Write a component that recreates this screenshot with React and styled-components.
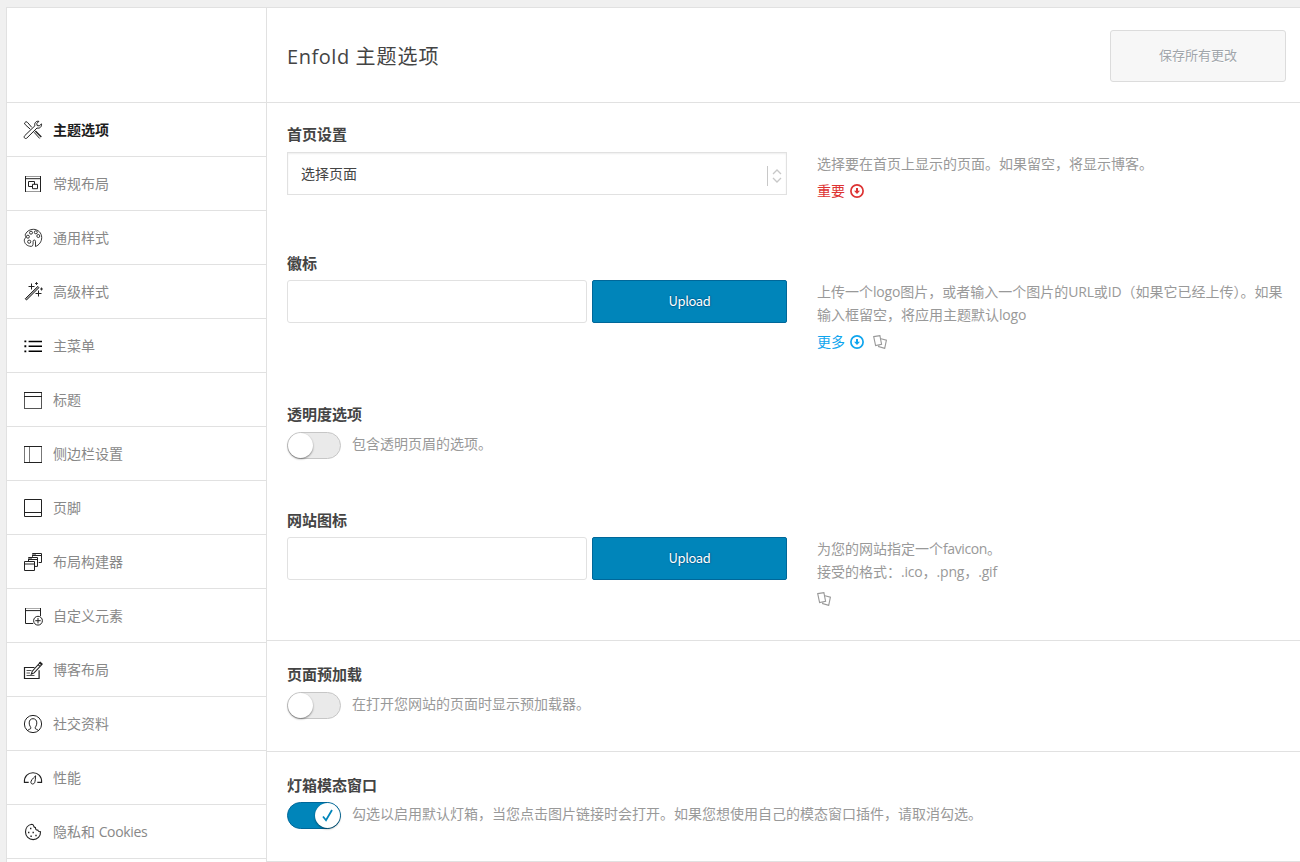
import React, { useState } from "react";
import styled, { createGlobalStyle } from "styled-components";

const GlobalStyle = createGlobalStyle`
  * {
    box-sizing: border-box;
  }
  body {
    margin: 0;
    background: #f0f0f0;
    font-family: "Open Sans", "Noto Sans CJK SC", sans-serif;
    overflow: hidden;
  }
`;

const Page = styled.div`
  display: flex;
  width: 1340px;
  height: 862px;
  padding: 7px 0 0 6px;
  overflow: hidden;
`;

const Sidebar = styled.nav`
  width: 260px;
  flex: none;
  height: 900px;
  background: #fff;
  border: 1px solid #e1e1e1;
  border-right: none;
`;

const Logo = styled.div`
  height: 95px;
  border-bottom: 1px solid #e1e1e1;
`;

const MenuItem = styled.a`
  display: flex;
  align-items: flex-start;
  gap: 10px;
  height: 54px;
  padding: 17px 16px 0;
  border-bottom: 1px solid #e1e1e1;
  color: ${({ $active }) => ($active ? "#1c1c1c" : "#888")};
  font-size: 14px;
  font-weight: ${({ $active }) => ($active ? 700 : 400)};
  line-height: 20px;
  cursor: pointer;
`;

const MenuIcon = styled.svg`
  width: 20px;
  height: 20px;
  flex: none;
  fill: none;
  stroke: #222;
  stroke-width: 1;
`;

const Latin = styled.span`
  letter-spacing: ${({ $spacing }) => $spacing || "-0.2px"};
`;

const Main = styled.main`
  flex: 1;
  height: 900px;
  background: #fff;
  border: 1px solid #e1e1e1;
`;

const Header = styled.header`
  display: flex;
  align-items: flex-start;
  justify-content: space-between;
  height: 95px;
  padding: 22px 53px 0 20px;
  border-bottom: 1px solid #e1e1e1;
`;

const Title = styled.h2`
  margin: 12px 0 0;
  color: #444;
  font-size: 20px;
  font-weight: 400;
  line-height: 30px;
  letter-spacing: 1px;
`;

const SaveButton = styled.button`
  width: 176px;
  height: 52px;
  padding: 0 0 4px;
  background: #f7f7f7;
  border: 1px solid #dcdcdc;
  border-radius: 3px;
  color: #a0a5aa;
  font-family: inherit;
  font-size: 13px;
  text-shadow: 0 1px 0 #fff;
`;

const Section = styled.section`
  display: flex;
  height: ${({ $height }) => $height}px;
  padding: ${({ $top }) => $top || 20}px 0 0 20px;
  border-bottom: ${({ $line }) => ($line ? "1px solid #e1e1e1" : "none")};
`;

const Field = styled.div`
  width: ${({ $wide }) => ($wide ? "900px" : "500px")};
  flex: none;
`;

const Label = styled.h4`
  height: 22px;
  margin: 0 0 ${({ $gap }) => $gap || 7}px;
  color: #444;
  font-size: 15px;
  font-weight: 700;
  line-height: 22px;
`;

const Select = styled.div`
  display: flex;
  justify-content: space-between;
  height: 43px;
  padding: 0 4px 0 13px;
  border: 1px solid #e1e1e1;
  box-shadow: inset 0 1px 2px rgba(0, 0, 0, 0.07);
  color: #444;
  font-size: 14px;
  line-height: 41px;
`;

const SelectArrows = styled.svg`
  width: 15px;
  height: 22px;
  margin-top: 12px;
  fill: none;
  stroke: #c8c8c8;
`;

const UploadRow = styled.div`
  display: flex;
  gap: 5px;
`;

const Input = styled.input`
  width: 300px;
  height: 43px;
  padding: 0 12px;
  border: 1px solid #e1e1e1;
  border-radius: 3px;
  outline: none;
`;

const UploadButton = styled.button`
  flex: 1;
  height: 43px;
  padding: 0 0 2px;
  background: #0085ba;
  border: 1px solid #006799;
  border-radius: 2px;
  color: #fff;
  font-family: "Noto Sans CJK SC", sans-serif;
  font-size: 13px;
  letter-spacing: -0.4px;
  text-shadow: 0 -1px 1px #006799, 1px 0 1px #006799, 0 1px 1px #006799;
`;

const Help = styled.div`
  width: 470px;
  margin: ${({ $top }) => $top || 28}px 0 0 30px;
  color: #999;
  font-size: 14px;
  line-height: 23px;
`;

const More = styled.div`
  display: flex;
  align-items: center;
  gap: 5px;
  height: 23px;
  margin-top: 4px;
  color: ${({ $important }) => ($important ? "#dd3333" : "#0fa5ee")};
`;

const SmallIcon = styled.svg`
  width: 14px;
  height: 14px;
  flex: none;
  fill: none;
  stroke: ${({ $grey }) => ($grey ? "#999" : "currentColor")};
  margin-left: ${({ $space }) => $space || 0}px;
`;

const ToggleRow = styled.div`
  display: flex;
  gap: 11px;
  color: #999;
  font-size: 14px;
  line-height: 23px;
`;

const Track = styled.span`
  display: flex;
  justify-content: ${({ $on }) => ($on ? "flex-end" : "flex-start")};
  width: 54px;
  height: 27px;
  flex: none;
  border: 1px solid ${({ $on }) => ($on ? "#006799" : "#c6c6c6")};
  border-radius: 14px;
  background: ${({ $on }) => ($on ? "#0085ba" : "#eaeaea")};
  cursor: pointer;
`;

const Knob = styled.span`
  display: flex;
  align-items: center;
  justify-content: center;
  width: 25px;
  height: 25px;
  border-radius: 50%;
  background: #fff;
  box-shadow: 0 1px 2px rgba(0, 0, 0, 0.45);
`;

const icons = {
  tools: (
    <>
      <path d="M1.4 3.2 3 1.6l1.5.8 4.3 5M1.4 3.2l1 1.6 4.9 4.4M11 12.2l5.7 6.3" />
      <path d="M12.3 11l6 5.9" strokeWidth="1.4" />
      <path d="M15.9 1.3c-2.7-.6-4.9 1.8-4 4.5L1.7 15.7c-1 1-.5 2.6.8 2.8.5.1 1-.1 1.4-.5L14 8c2.8.8 5-1.4 4.5-4.1l-2.3 2-2.1-.4-.3-2z" />
    </>
  ),
  layout: (
    <>
      <path d="M2 2.5h16M2 17.5h16" stroke="#999" />
      <path d="M2.5 2v16M17.5 2v16M2 4.7h16" />
      <path d="M9.5 12.5h-4v-5h6v2.7M9.5 10.3h5v4.4h-5z" />
    </>
  ),
  palette: (
    <g strokeWidth=".9">
      <path d="M8.3 18.4C3.9 18.2 1.3 15.5 1.3 12.2c0-1.7 1.5-2 1.5-3.3S1.7 7.6 2.5 6C4.1 3 7 1.3 10.3 1.3c4.8 0 8.4 3.7 8.4 8.2 0 4.2-2.6 7.6-6.2 9v-5.2c0-.8-.5-1.3-1.2-1.3s-1.2.5-1.2 1.3c0 1.8.3 5.1-1.8 5.1z" />
      <circle cx="8" cy="4.7" r="1.5" />
      <circle cx="12.8" cy="4.3" r="1.5" />
      <circle cx="4.9" cy="8.7" r="1.5" />
      <circle cx="15.3" cy="8" r="1.5" />
      <circle cx="6.2" cy="13.7" r="1.6" />
    </g>
  ),
  wand: (
    <>
      <path d="M2.3 16.7 14.8 4.4l1.2 1.2L3.5 18z" fill="#aaa" />
      <path d="M8.5 1.5v6M5.5 4.5h6M15.5 8.5v6M12.5 11.5h6" />
      <path d="M13.5 0v3M12 1.5h3M18.5 5.5v3M17 7h3" strokeWidth=".9" />
    </>
  ),
  list: (
    <g stroke="#000" strokeWidth="1.4">
      <path d="M5.6 5.5H19M5.6 10.3H19M5.6 15.3H19" />
      <path d="M1.4 5.4h1.9M1.4 10.3h1.9M1.4 15.4h1.9" strokeWidth="1.9" />
    </g>
  ),
  header: (
    <>
      <path d="M1.5 2v17M18.5 2v17M1 18.5h18" stroke="#555" />
      <path d="M1 2.5h18M1 6.5h18" />
    </>
  ),
  sidebar: (
    <>
      <path d="M1.5 2v17M18.5 2v17M6.5 2v17" stroke="#777" />
      <path d="M1 2.5h18M1 18.5h18" />
    </>
  ),
  footer: <path d="M1.5 1.5h17v17h-17zM1.5 14.5h17" />,
  builder: (
    <>
      <path d="M9.5 4.8V1.5h9v9h-2.8M9.5 3.5h9M5.5 9V5.5h9v8.9h-3M5.5 7.5h9" />
      <path d="M1.5 9.5h10v9h-10zM1.5 12h10" />
      <path d="M9 2.5h4M5 6.5h4" stroke="#888" />
    </>
  ),
  custom: (
    <>
      <path d="M2 2.5h16" stroke="#aaa" />
      <path d="M10.2 17.5H2.5V2M17.5 2v8M2 4.6h16" />
      <circle cx="15" cy="14.7" r="4.4" />
      <path d="M15 12v5.4M12.3 14.7h5.4" />
    </>
  ),
  blog: (
    <>
      <path d="M11.5 7.5h-10v11h14.6v-8.3" strokeWidth="1.2" />
      <path d="M3.5 10.5h5M3.5 13h3.5M3.5 15.5h8" stroke="#555" />
      <path d="M8.3 14.2l1-3L16.7 3l1.9 1.8-7.5 8.1zM15.1 4.7 17 6.5M16.2 3.2l1-1 2 1.9-.9 1" strokeWidth="1.1" />
    </>
  ),
  social: (
    <>
      <circle cx="10" cy="10" r="8.6" />
      <path d="M4.5 16.6c.9-1.4 3.4-1.2 3.4-2.6 0-1-1.7-2.1-1.7-5.1C6.2 6.2 7.8 4.7 10 4.7s3.8 1.5 3.8 4.2c0 3-1.7 4.1-1.7 5.1 0 1.4 2.5 1.2 3.4 2.6" />
    </>
  ),
  gauge: (
    <>
      <path d="M5.7 14.4H1.4C1 8.6 4.8 4.7 10 4.7s9 3.9 8.6 9.7h-4.3" strokeWidth="1.1" />
      <path d="M12.6 7.8c-3.2 3.1-4.9 4.9-4.7 6.7.2 1.9 2.9 2.1 3.7.2.6-1.6.9-3.9 1-6.9z" />
    </>
  ),
  cookie: (
    <>
      <path d="M8.8 2.3c.9 0 1.5.5 1.7 1.4.2 1.1.8 1.8 1.9 1.9.1 1.7.9 2.6 2.4 2.5.4 1.3 1.4 1.7 2.7 1.6.3 4.5-3.1 7.9-7.4 7.9-4.2 0-7.6-3.3-7.6-7.5 0-4 2.5-7.3 6.3-7.8z" strokeWidth="1.1" />
      <path d="M7 6.5h1.4M5 10.5h1.4M9.5 10.5h1.4M7.4 14.2h1.4M12.3 13.5h1.4" strokeWidth="1.4" />
    </>
  ),
};

const menu = [
  { icon: "tools", text: "主题选项" },
  { icon: "layout", text: "常规布局" },
  { icon: "palette", text: "通用样式" },
  { icon: "wand", text: "高级样式" },
  { icon: "list", text: "主菜单" },
  { icon: "header", text: "标题" },
  { icon: "sidebar", text: "侧边栏设置" },
  { icon: "footer", text: "页脚" },
  { icon: "builder", text: "布局构建器" },
  { icon: "custom", text: "自定义元素" },
  { icon: "blog", text: "博客布局" },
  { icon: "social", text: "社交资料" },
  { icon: "gauge", text: "性能" },
  { icon: "cookie", text: "隐私和 ", latin: "Cookies" },
];

const ArrowIcon = () => (
  <SmallIcon viewBox="0 0 14 14">
    <circle cx="7" cy="7" r="6.1" strokeWidth="1.7" />
    <path d="M7 4v3.5" strokeWidth="2" />
    <path d="M4 6.8h6L7 10z" fill="currentColor" stroke="none" />
  </SmallIcon>
);

const CopyIcon = ({ space }) => (
  <SmallIcon $grey $space={space} viewBox="0 0 14 14">
    <path d="M.7 1.6 6.9.6l1.7 8.7-6 1.2z" strokeWidth="1.1" />
    <path d="M8 3.7l5.4 1.4-1.7 8.3-6.1-1.8.3-1.2" strokeWidth="1.1" />
  </SmallIcon>
);

const Toggle = ({ defaultOn = false, children }) => {
  const [on, setOn] = useState(defaultOn);
  return (
    <ToggleRow>
      <Track $on={on} onClick={() => setOn(!on)}>
        <Knob>
          {on && (
            <svg width="11" height="13" viewBox="0 0 11 13" fill="none" stroke="#0085ba">
              <path d="M1 7.5l3 3.7L10 1" strokeWidth="1.8" />
            </svg>
          )}
        </Knob>
      </Track>
      {children}
    </ToggleRow>
  );
};

const Upload = () => (
  <UploadRow>
    <Input />
    <UploadButton>Upload</UploadButton>
  </UploadRow>
);

const App = () => {
  const [active, setActive] = useState("tools");

  return (
    <>
      <GlobalStyle />
      <Page>
        <Sidebar>
          <Logo />
          {menu.map((item) => (
            <MenuItem
              key={item.icon}
              $active={active === item.icon}
              onClick={() => setActive(item.icon)}
            >
              <MenuIcon viewBox="0 0 20 20">{icons[item.icon]}</MenuIcon>
              <span>
                {item.text}
                {item.latin && <Latin $spacing="-0.35px">{item.latin}</Latin>}
              </span>
            </MenuItem>
          ))}
        </Sidebar>
        <Main>
          <Header>
            <Title>
              <Latin $spacing="0.55px">Enfold </Latin>主题选项
            </Title>
            <SaveButton>保存所有更改</SaveButton>
          </Header>
          <Section $height={129}>
            <Field>
              <Label>首页设置</Label>
              <Select>
                选择页面
                <SelectArrows viewBox="0 0 15 22">
                  <path d="M.5 1v20" />
                  <path d="M6 9l4-4 4 4M6 13l4 4 4-4" strokeWidth="1.3" />
                </SelectArrows>
              </Select>
            </Field>
            <Help $top={29}>
              选择要在首页上显示的页面。如果留空，将显示博客。
              <More $important>
                重要 <ArrowIcon />
              </More>
            </Help>
          </Section>
          <Section $height={151}>
            <Field>
              <Label $gap={6}>徽标</Label>
              <Upload />
            </Field>
            <Help>
              上传一个<Latin>logo</Latin>图片，或者输入一个图片的<Latin>URL</Latin>或
              <Latin>ID</Latin>（如果它已经上传）。如果
              <br />
              输入框留空，将应用主题默认<Latin>logo</Latin>
              <More>
                更多 <ArrowIcon />
                <CopyIcon space={4} />
              </More>
            </Help>
          </Section>
          <Section $height={106}>
            <Field $wide>
              <Label>透明度选项</Label>
              <Toggle>包含透明页眉的选项。</Toggle>
            </Field>
          </Section>
          <Section $height={152} $line>
            <Field>
              <Label $gap={6}>网站图标</Label>
              <Upload />
            </Field>
            <Help>
              为您的网站指定一个<Latin $spacing="-0.4px">favicon</Latin>。
              <br />
              接受的格式：<Latin>.ico</Latin>，<Latin>.png</Latin>，<Latin>.gif</Latin>
              <More>
                <CopyIcon />
              </More>
            </Help>
          </Section>
          <Section $height={111} $top={22} $line>
            <Field $wide>
              <Label>页面预加载</Label>
              <Toggle>在打开您网站的页面时显示预加载器。</Toggle>
            </Field>
          </Section>
          <Section $height={110} $top={22} $line>
            <Field $wide>
              <Label $gap={6}>灯箱模态窗口</Label>
              <Toggle defaultOn>
                勾选以启用默认灯箱，当您点击图片链接时会打开。如果您想使用自己的模态窗口插件，请取消勾选。
              </Toggle>
            </Field>
          </Section>
        </Main>
      </Page>
    </>
  );
};

export default App;
